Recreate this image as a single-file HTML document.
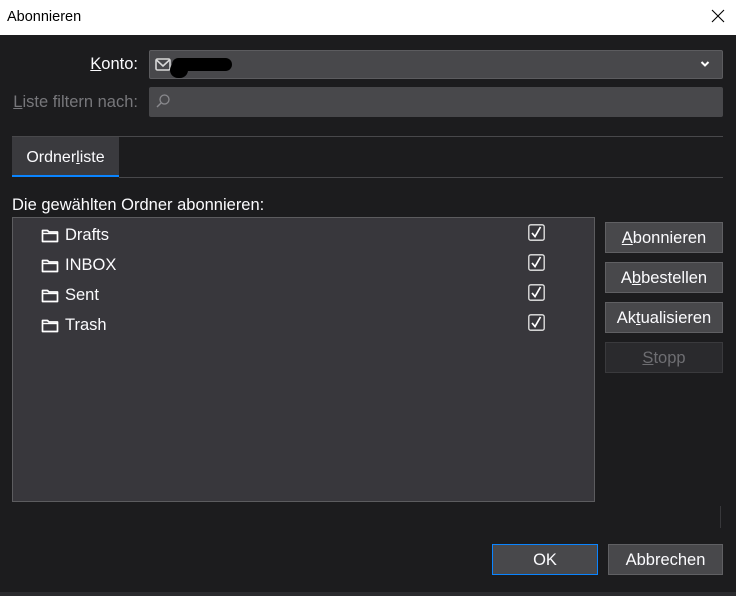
<!DOCTYPE html>
<html><head><meta charset="utf-8"><style>
*{margin:0;padding:0;box-sizing:border-box}
body{width:736px;height:596px;overflow:hidden;background:#1c1c1e;font-family:"Liberation Sans",sans-serif;font-size:16.5px;color:#fbfbfe;position:relative}
.a{position:absolute}
.title{left:0;top:0;width:736px;height:35px;background:#fff;color:#000;font-size:14.5px;line-height:35px;padding-left:7px}
.lbl{text-align:right;width:138px;left:0}
.box{background:#48484b;border:1px solid #5c5c5f;border-radius:2px}
.btn{left:605px;width:118px;height:31px;background:#48484b;border:1px solid #606063;text-align:center;line-height:31px;font-size:16.5px}
u{text-decoration:underline}
.row{left:41px;height:22px;line-height:24px;font-size:16.5px}
.row svg{vertical-align:-3px;margin-right:6px}
.cb{left:528px}
</style></head><body>
<div class="a title">Abonnieren</div>
<svg class="a" style="left:711px;top:9px" width="14" height="14" viewBox="0 0 14 14"><path d="M1 1L13 13M13 1L1 13" stroke="#000" stroke-width="1.1"/></svg>

<div class="a lbl" style="top:55px"><u>K</u>onto:</div>
<div class="a box" style="left:149px;top:50px;width:574px;height:29px"></div>
<svg class="a" style="left:155px;top:57px" width="18" height="16" viewBox="0 0 18 16"><rect x="1" y="2" width="14" height="11" rx="1.5" fill="none" stroke="#d8d8d8" stroke-width="1.6"/><path d="M1.5 3L8 9L14.5 3" fill="none" stroke="#d8d8d8" stroke-width="1.6"/></svg>
<div class="a" style="left:172px;top:58px;width:60px;height:13px;background:#000;border-radius:7px"></div>
<div class="a" style="left:170px;top:62px;width:18px;height:16px;background:#000;border-radius:9px"></div>
<svg class="a" style="left:700px;top:60px" width="10" height="8" viewBox="0 0 10 8"><path d="M1.5 2L5 5.5L8.5 2" fill="none" stroke="#fff" stroke-width="2"/></svg>

<div class="a lbl" style="top:93px;color:#77777b"><u>L</u>iste filtern nach:</div>
<div class="a box" style="left:149px;top:87px;width:574px;height:30px;border-color:#48484b"></div>
<svg class="a" style="left:155px;top:93px" width="16" height="16" viewBox="0 0 16 16"><circle cx="9.5" cy="6.5" r="4.5" fill="none" stroke="#8a8a8e" stroke-width="1.3"/><path d="M6.3 9.7L2 14" stroke="#8a8a8e" stroke-width="1.4"/></svg>

<div class="a" style="left:12px;top:136px;width:711px;height:1px;background:#48484b"></div>
<div class="a" style="left:12px;top:137px;width:107px;height:40px;background:#3a3a3e;line-height:42px;text-align:center;font-size:16px">Ordner<u>l</u>iste</div>
<div class="a" style="left:12px;top:175px;width:107px;height:2px;background:#0a84ff"></div>
<div class="a" style="left:119px;top:177px;width:604px;height:1px;background:#48484b"></div>

<div class="a" style="left:12px;top:196px">Die gewählten Ordner abonnieren:</div>
<div class="a" style="left:12px;top:217px;width:583px;height:285px;background:#38373c;border:1px solid #5c5c5f"></div>

<div class="a row" style="top:223px"><svg width="18" height="15" viewBox="0 0 18 15"><path d="M1.5 2.5h5l1.5 1.5h8.5v9.5h-15z" fill="none" stroke="#fff" stroke-width="1.7" stroke-linejoin="round"/><path d="M1.5 5.5h15" stroke="#fff" stroke-width="1.4"/></svg>Drafts</div>
<div class="a row" style="top:253px"><svg width="18" height="15" viewBox="0 0 18 15"><path d="M1.5 2.5h5l1.5 1.5h8.5v9.5h-15z" fill="none" stroke="#fff" stroke-width="1.7" stroke-linejoin="round"/><path d="M1.5 5.5h15" stroke="#fff" stroke-width="1.4"/></svg>INBOX</div>
<div class="a row" style="top:283px"><svg width="18" height="15" viewBox="0 0 18 15"><path d="M1.5 2.5h5l1.5 1.5h8.5v9.5h-15z" fill="none" stroke="#fff" stroke-width="1.7" stroke-linejoin="round"/><path d="M1.5 5.5h15" stroke="#fff" stroke-width="1.4"/></svg>Sent</div>
<div class="a row" style="top:313px"><svg width="18" height="15" viewBox="0 0 18 15"><path d="M1.5 2.5h5l1.5 1.5h8.5v9.5h-15z" fill="none" stroke="#fff" stroke-width="1.7" stroke-linejoin="round"/><path d="M1.5 5.5h15" stroke="#fff" stroke-width="1.4"/></svg>Trash</div>

<svg class="a cb" style="top:224px" width="17" height="17" viewBox="0 0 17 17"><rect x="0.8" y="0.8" width="15.4" height="15.4" rx="2" fill="none" stroke="#e8e8e8" stroke-width="1.3"/><path d="M4 9L7 12.5L12.5 3" fill="none" stroke="#fff" stroke-width="1.7"/></svg>
<svg class="a cb" style="top:254px" width="17" height="17" viewBox="0 0 17 17"><rect x="0.8" y="0.8" width="15.4" height="15.4" rx="2" fill="none" stroke="#e8e8e8" stroke-width="1.3"/><path d="M4 9L7 12.5L12.5 3" fill="none" stroke="#fff" stroke-width="1.7"/></svg>
<svg class="a cb" style="top:284px" width="17" height="17" viewBox="0 0 17 17"><rect x="0.8" y="0.8" width="15.4" height="15.4" rx="2" fill="none" stroke="#e8e8e8" stroke-width="1.3"/><path d="M4 9L7 12.5L12.5 3" fill="none" stroke="#fff" stroke-width="1.7"/></svg>
<svg class="a cb" style="top:314px" width="17" height="17" viewBox="0 0 17 17"><rect x="0.8" y="0.8" width="15.4" height="15.4" rx="2" fill="none" stroke="#e8e8e8" stroke-width="1.3"/><path d="M4 9L7 12.5L12.5 3" fill="none" stroke="#fff" stroke-width="1.7"/></svg>

<div class="a btn" style="top:222px"><u>A</u>bonnieren</div>
<div class="a btn" style="top:262px">A<u>b</u>bestellen</div>
<div class="a btn" style="top:302px">Ak<u>t</u>ualisieren</div>
<div class="a btn" style="top:342px;background:#2a2a2d;border-color:#3a3a3d;color:#6e6e72"><u>S</u>topp</div>

<div class="a" style="left:720px;top:506px;width:1px;height:22px;background:#38383b"></div>

<div class="a btn" style="left:492px;top:544px;width:106px;border-color:#0a84ff">OK</div>
<div class="a btn" style="left:608px;top:544px;width:115px">Abbrechen</div>
<div class="a" style="left:0;top:592px;width:736px;height:4px;background:#2b2b2e"></div>
</body></html>
